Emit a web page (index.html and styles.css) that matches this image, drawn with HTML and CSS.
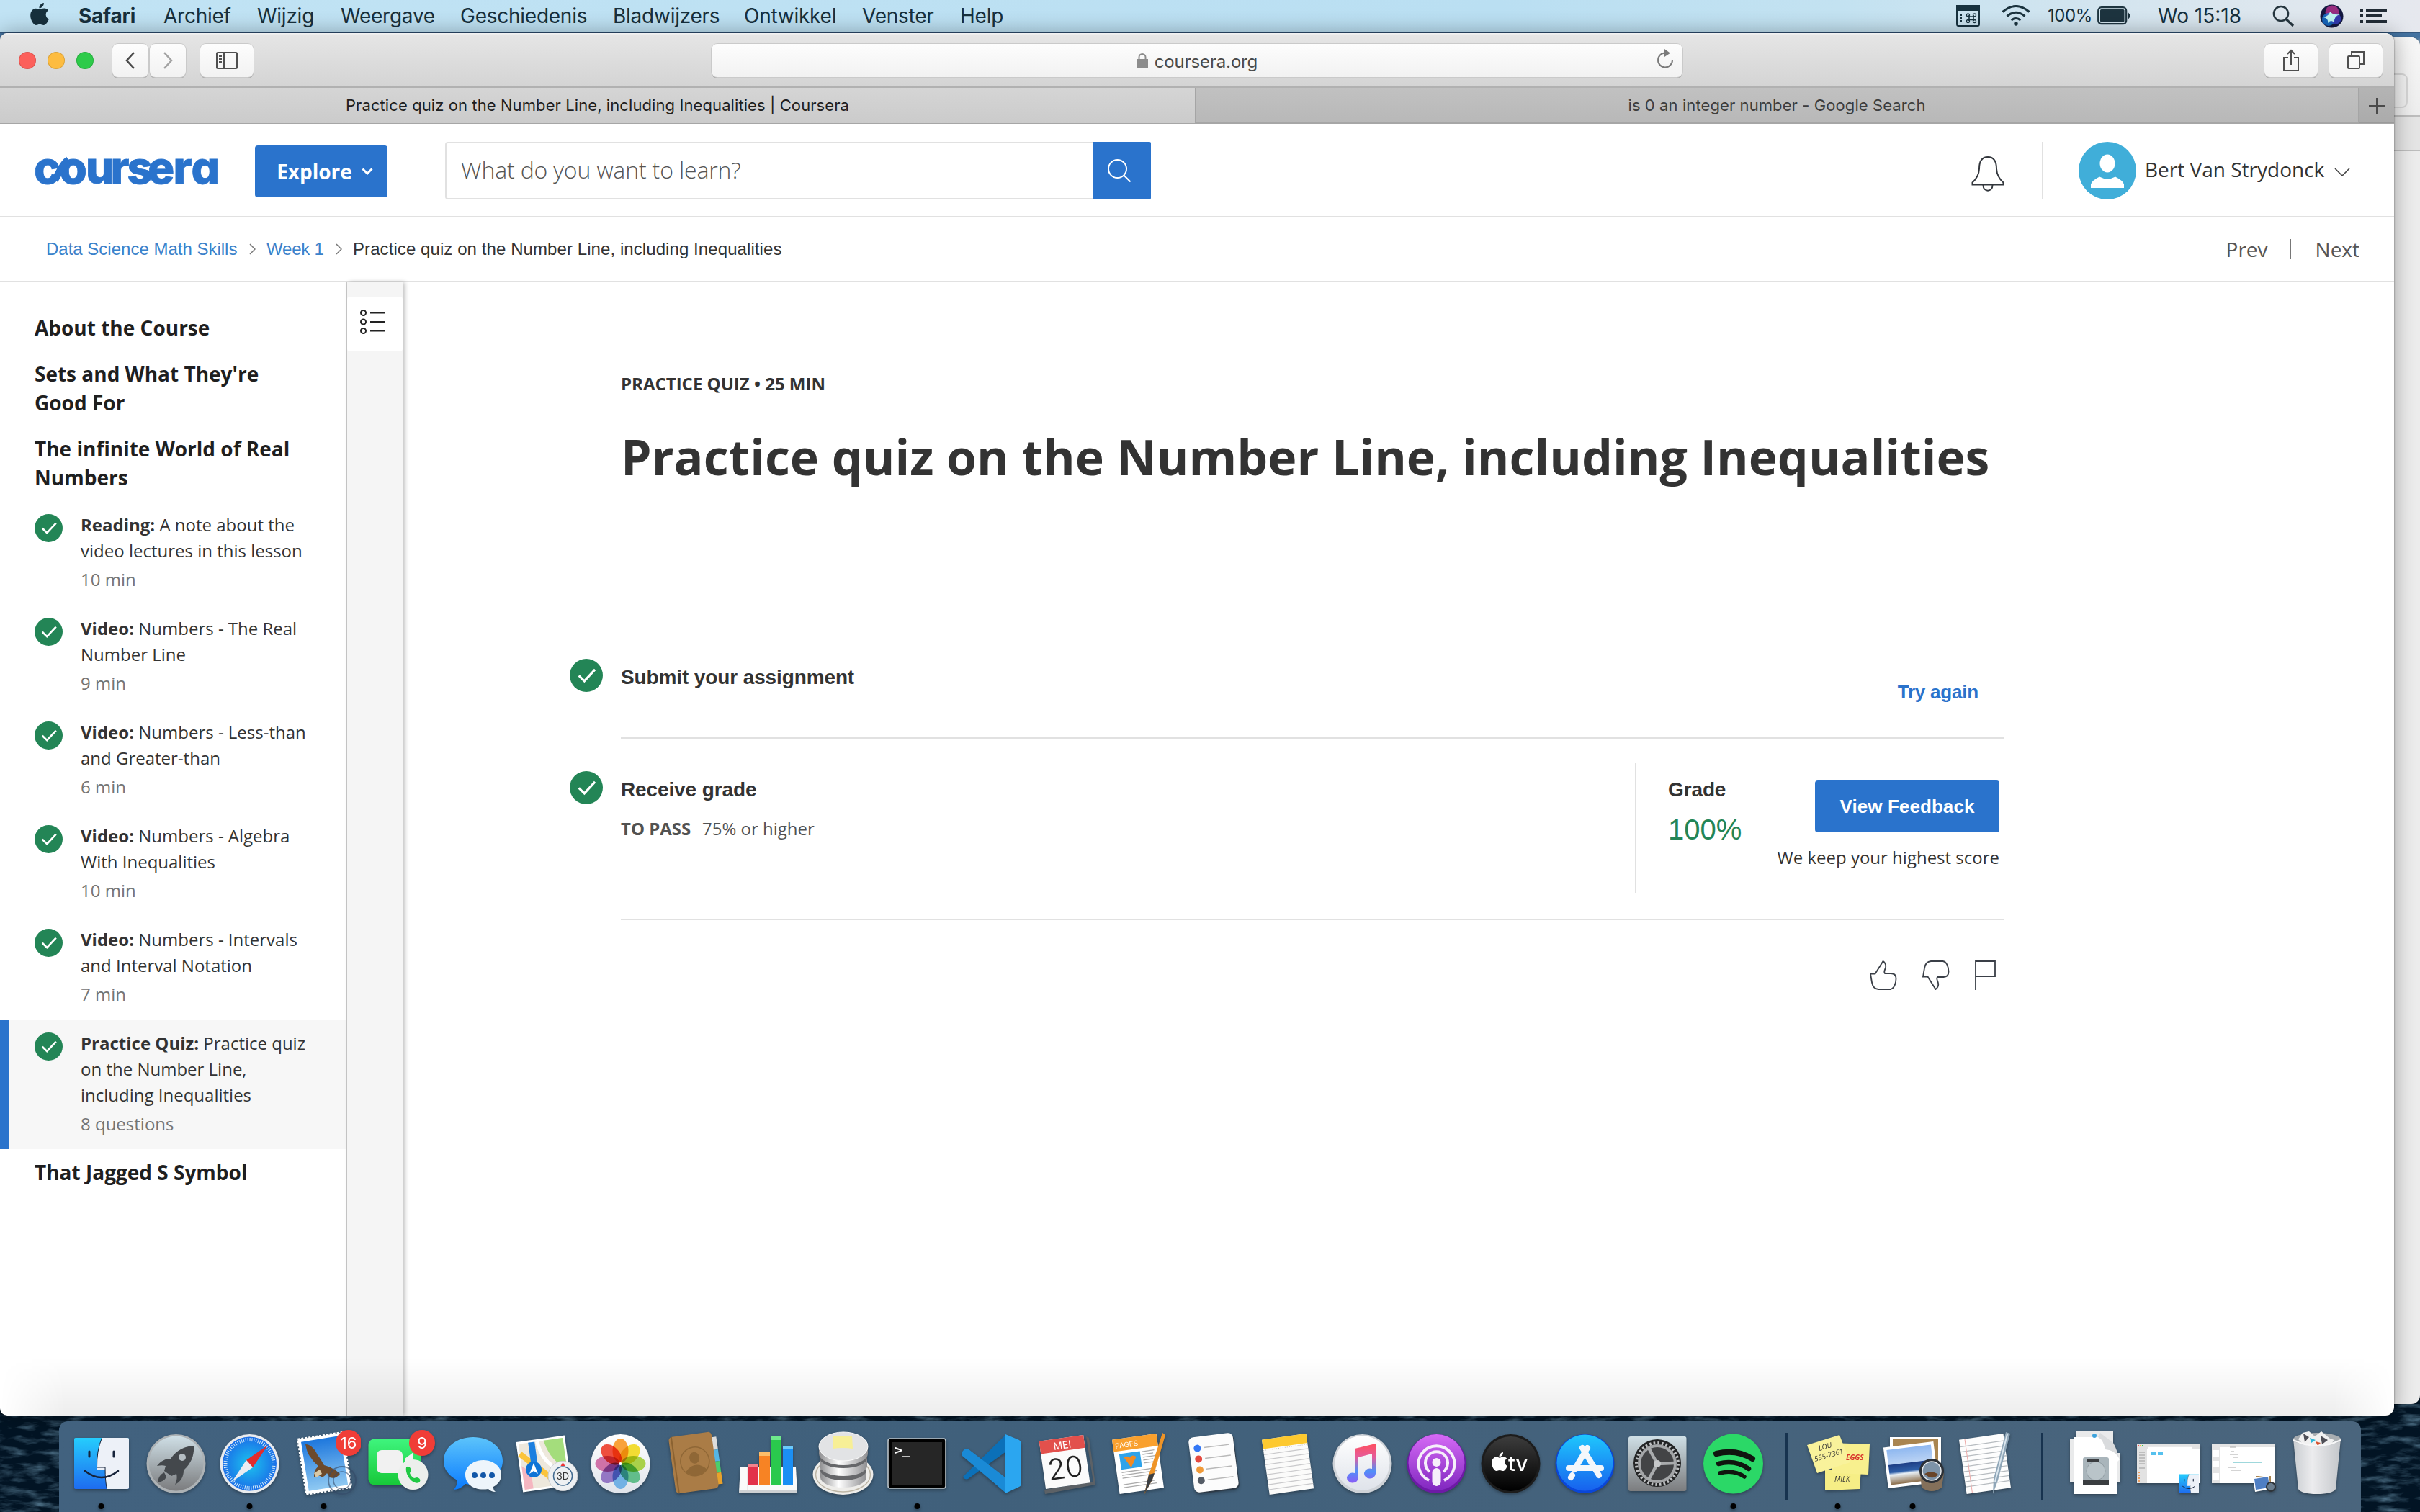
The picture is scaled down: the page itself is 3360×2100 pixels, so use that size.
FILE: index.html
```html
<!DOCTYPE html>
<html lang="nl">
<head>
<meta charset="utf-8">
<title>Practice quiz on the Number Line, including Inequalities | Coursera</title>
<link rel="stylesheet" href="styles.css">
</head>
<body>
<svg class="defs" width="0" height="0" aria-hidden="true">
  <defs>
    <linearGradient id="gFinder" x2="0" y2="1"><stop offset="0" stop-color="#25cdfd"/><stop offset="1" stop-color="#1e6cf0"/></linearGradient>
    <linearGradient id="gWhite" x2="0" y2="1"><stop offset="0" stop-color="#fff"/><stop offset="1" stop-color="#dfe3ea"/></linearGradient>
    <linearGradient id="gGrey" x2="0" y2="1"><stop offset="0" stop-color="#cfdfe6"/><stop offset="1" stop-color="#7b7c7e"/></linearGradient>
    <linearGradient id="gGreen" x2="0" y2="1"><stop offset="0" stop-color="#3ff57e"/><stop offset="1" stop-color="#17c838"/></linearGradient>
    <linearGradient id="gMsg" x2="0" y2="1"><stop offset="0" stop-color="#5cc4fb"/><stop offset="1" stop-color="#0a7bff"/></linearGradient>
    <radialGradient id="gCompass"><stop offset="0" stop-color="#1cc4ee"/><stop offset="1" stop-color="#1a6fe8"/></radialGradient>
    <linearGradient id="gSky" x2="0" y2="1"><stop offset="0" stop-color="#1d77dd"/><stop offset="1" stop-color="#8fc9f2"/></linearGradient>
    <linearGradient id="gPod" x2="0" y2="1"><stop offset="0" stop-color="#d56af5"/><stop offset="1" stop-color="#8128c0"/></linearGradient>
    <linearGradient id="gStore" x2="0" y2="1"><stop offset="0" stop-color="#1fc8fd"/><stop offset="1" stop-color="#1761ee"/></linearGradient>
    <linearGradient id="gTv" x2="0" y2="1"><stop offset="0" stop-color="#3c3c3c"/><stop offset="1" stop-color="#000"/></linearGradient>
    <linearGradient id="gNote" x2="0" y2="1"><stop offset="0" stop-color="#ff4f5e"/><stop offset=".35" stop-color="#e45c9c"/><stop offset=".7" stop-color="#4f8ff8"/><stop offset="1" stop-color="#8a5cf6"/></linearGradient>
    <linearGradient id="gMetal" x2="1" y2="0"><stop offset="0" stop-color="#8d8d8f"/><stop offset=".4" stop-color="#fff"/><stop offset="1" stop-color="#8f8f92"/></linearGradient>
    <linearGradient id="gBin" x2="1" y2="0"><stop offset="0" stop-color="#c9cdd1"/><stop offset=".4" stop-color="#ececee"/><stop offset="1" stop-color="#c3c6ca"/></linearGradient>
    <linearGradient id="gSea" x2="0" y2="1"><stop offset="0" stop-color="#8fb8f0"/><stop offset=".42" stop-color="#b9d2f4"/><stop offset=".44" stop-color="#1f3f86"/><stop offset=".65" stop-color="#2e5fa8"/><stop offset=".72" stop-color="#e8f0f6"/><stop offset="1" stop-color="#8a6c48"/></linearGradient>
    <filter id="waves" x="0" y="0" width="100%" height="100%">
      <feTurbulence type="fractalNoise" baseFrequency=".03 .11" numOctaves="4" seed="4"/>
      <feColorMatrix values="0 0 0 0 .15  0 0 0 0 .3  0 0 0 0 .42  1.500 0 0 0 -.68"/>
    </filter>
    <symbol id="check" viewBox="0 0 38 38"><circle cx="19" cy="19" r="19" fill="#238556"/><path d="M10.5 19.3l6.3 6.2L29 12.3" fill="none" stroke="#fff" stroke-width="2.6"/></symbol>
    <symbol id="apple" viewBox="0 0 24 30"><path d="M17.5 0c.3 3.600-2.700 7-6 6.900C11.200 3.600 14.200.300 17.500 0zM12 8.500c1.500 0 3-1.500 6-1.500 2.200 0 4.300 1.200 5.300 2.800-4.700 2.700-3.900 9.300.700 11.200-1.200 3.600-4.200 8-6.700 8-2 0-2.800-1.200-5.100-1.200-2.400 0-3.300 1.200-5.100 1.200C4.200 29 0 22.500 0 16.500 0 10.400 3.700 7.200 7 7.200c2.200 0 3.700 1.300 5 1.300z"/></symbol>
    <symbol id="finder" viewBox="0 0 76 71"><rect width="76" height="71" rx="2" fill="url(#gFinder)"/><path d="M38.500 0H74a2 2 0 0 1 2 2v67a2 2 0 0 1-2 2H45.500Q43 61 43 44H31.500Q31 18 38.500 0z" fill="#edf1f8"/><path d="M21 19v7M55 19v7" stroke="#16233a" stroke-width="3" stroke-linecap="round"/><path d="M15 46q23 18 46 0" fill="none" stroke="#16233a" stroke-width="2.600" stroke-linecap="round"/><path d="M38.500 0Q31 18 31.500 41H43Q43 61 45.500 71" fill="none" stroke="#16233a" stroke-width="1"/></symbol>
  </defs>
</svg>

<div class="desktop">
  <svg class="wallpaper" width="3360" height="150" aria-hidden="true"><rect width="3360" height="150" filter="url(#waves)"/></svg>

  <header class="menubar">
    <svg class="apple" width="26" height="32"><use href="#apple"/></svg>
    <nav class="menus"><b>Safari</b><span>Archief</span><span>Wijzig</span><span>Weergave</span><span>Geschiedenis</span><span>Bladwijzers</span><span>Ontwikkel</span><span>Venster</span><span>Help</span></nav>
    <div class="status">
      <svg width="33" height="30" viewBox="0 0 33 30" fill="none" stroke="#17323f" stroke-width="2"><rect x="1" y="1" width="31" height="28" rx="2.500"/><path fill="#17323f" d="M1 1h31v6H1z"/><path d="M5 14h3M5 18h3M5 22h3" /><path stroke-width="1.600" d="M18 14v8M24 14v8M16 16h10M16 20.500h10"/><circle cx="16.500" cy="14" r="2" stroke-width="1.300"/><circle cx="25.500" cy="14" r="2" stroke-width="1.300"/><circle cx="16.500" cy="22.500" r="2" stroke-width="1.300"/><circle cx="25.500" cy="22.500" r="2" stroke-width="1.300"/></svg>
      <svg width="40" height="30" viewBox="0 0 40 30" fill="none" stroke="#1b333e" stroke-width="3"><path d="M1.500 9.500q18.500-16 37 0M7.500 15.500q12.500-10.500 25 0M13.500 21q6.500-5 13 0"/><circle cx="20" cy="26" r="2" fill="#1b333e" stroke-width="1.500"/></svg>
      <span class="percent">100%</span>
      <svg class="battery" width="48" height="26" viewBox="0 0 48 26"><rect x="1.200" y="1.200" width="39" height="23" rx="4.500" fill="none" stroke="#1d343f" stroke-width="2.200"/><rect x="4" y="4" width="33.500" height="17.500" rx="1.500" fill="#1d343f"/><path d="M43 8.500q5 4.500 0 9z" fill="#1d343f"/></svg>
      <span class="clock">Wo 15:18</span>
      <svg width="31" height="30" viewBox="0 0 31 30" fill="none" stroke="#26363f" stroke-width="2.600"><circle cx="12" cy="12" r="10"/><path d="M19 19.500l10 9.500" stroke-width="3.200"/></svg>
      <svg class="siri" width="33" height="33" viewBox="0 0 33 33"><circle cx="16.500" cy="16.500" r="16" fill="#141840"/><circle cx="17" cy="11" r="9.500" fill="#b8338f" opacity=".8"/><circle cx="12" cy="21" r="9" fill="#1779d8" opacity=".8"/><circle cx="22" cy="20" r="7.500" fill="#3a44c8" opacity=".8"/><path d="M5 18q8-2 9-8 3 5 14 4-9 2-8 12-4-6-9 0 1-7-6-8z" fill="#bff4f2"/></svg>
      <svg width="37" height="21" viewBox="0 0 37 21" fill="#222c36"><path d="M0 0h4v4H0zM8 0h29v4H8zM0 8h4v4H0zM8 8h22v4H8zM0 16h4v4H0zM8 16h29v4H8z"/></svg>
    </div>
  </header>

  <div class="back-window"><div class="back-tools"></div><div class="back-tabs"></div></div>

  <main class="window">
    <div class="toolbar">
      <div class="lights"><i class="red"></i><i class="amber"></i><i class="green"></i></div>
      <div class="nav-buttons">
        <span class="tool"><svg width="14" height="24" fill="none" stroke="#4a4a4a" stroke-width="2.600"><path d="M12 1L2 12l10 11"/></svg></span>
        <span class="tool"><svg width="14" height="24" fill="none" stroke="#a3a3a3" stroke-width="2.600"><path d="M2 1l10 11L2 23"/></svg></span>
      </div>
      <span class="tool wide"><svg width="30" height="24" fill="none" stroke="#4f4f4f" stroke-width="2"><rect x="1" y="1" width="28" height="22" rx="1.500"/><path d="M11 1v22M4 6h4M4 10h4M4 14h4"/></svg></span>
      <div class="address"><span class="site"><svg width="16" height="20" viewBox="0 0 16 20"><path d="M0 8h16v12H0z" fill="#8c8c8c"/><path d="M3.500 9V5.500a4.500 4.500 0 0 1 9 0V9" fill="none" stroke="#8c8c8c" stroke-width="2"/></svg>coursera.org</span><svg class="reload" width="24" height="28" viewBox="0 0 24 28" fill="none" stroke="#7a7a7a" stroke-width="2"><path d="M12 5.500a10 10 0 1 0 10 10"/><path d="M11 0l8 5.800-8 5.200z" fill="#7a7a7a" stroke="none"/></svg></div>
      <span class="tool wide share"><svg width="22" height="32" fill="none" stroke="#4f4f4f" stroke-width="2"><path d="M7 12H1v18h20V12h-6M11 22V2M6 7l5-5 5 5"/></svg></span>
      <span class="tool wide"><svg width="24" height="26" fill="none" stroke="#4f4f4f" stroke-width="2"><rect x="1" y="7" width="16" height="17" rx="1"/><path d="M6 7V1h17v17h-6"/></svg></span>
    </div>
    <div class="tabs">
      <div class="tab active">Practice quiz on the Number Line, including Inequalities | Coursera</div>
      <div class="tab">is 0 an integer number - Google Search</div>
      <div class="new-tab"><svg width="22" height="22" stroke="#4a4a4a" stroke-width="2"><path d="M11 0v22M0 11h22"/></svg></div>
    </div>

    <div class="page">
      <header class="site-header">
        <svg class="logo" width="256" height="44" viewBox="0 0 256 44" role="img" aria-label="coursera"><text y="39" x="-2 33.500 70 104.500 127.500 156 191.500 216.500">coursera</text><path d="M27 34C33 25 37 12 46 6" fill="none" stroke="#2a73cc" stroke-width="10"/></svg>
        <button class="explore">Explore<svg width="16" height="10" fill="none" stroke="#fff" stroke-width="3"><path d="M1.500 1.500L8 8l6.500-6.500"/></svg></button>
        <div class="search"><span>What do you want to learn?</span><button><svg width="32" height="32" fill="none" stroke="#fff" stroke-width="2"><circle cx="13.500" cy="13.500" r="12.500"/><path d="M22 22l9.500 9.500"/></svg></button></div>
        <div class="account">
          <svg class="bell" width="46" height="49" viewBox="0 0 46 49" fill="none" stroke="#33373d" stroke-width="2"><path d="M1.500 39.500v-3q9-8 9.500-19Q11 1 23 1t12 16.500q.5 11 9.500 19v3zM16.500 40.500c0 9.500 13 9.500 13 0"/></svg>
          <span class="rule"></span>
          <svg class="avatar" width="80" height="80" viewBox="0 0 80 80"><circle cx="40" cy="40" r="40" fill="#40aed9"/><ellipse cx="40" cy="30" rx="10.500" ry="12.500" fill="#fff"/><path d="M17 64v-5q1-5 12-10.500 11 6 22 0Q62 54 63 59v5z" fill="#fff"/></svg>
          <span class="user">Bert Van Strydonck</span>
          <svg class="caret" width="22" height="12" fill="none" stroke="#444" stroke-width="1.600"><path d="M1 1l10 10L21 1"/></svg>
        </div>
      </header>

      <nav class="crumbs">
        <a class="c1">Data Science Math Skills</a><svg width="9" height="16" fill="none" stroke="#777" stroke-width="1.500"><path d="M1 1l7 7-7 7"/></svg>
        <a class="c2">Week 1</a><svg width="9" height="16" fill="none" stroke="#777" stroke-width="1.500"><path d="M1 1l7 7-7 7"/></svg>
        <span class="here">Practice quiz on the Number Line, including Inequalities</span>
        <span class="prev">Prev</span><i></i><span class="next">Next</span>
      </nav>

      <div class="body">
        <aside class="sidebar">
          <h3>About the Course</h3>
          <h3>Sets and What They're<br>Good For</h3>
          <h3>The infinite World of Real<br>Numbers</h3>
          <div class="item"><svg width="39" height="39"><use href="#check"/></svg><p><b>Reading:</b> A note about the<br>video lectures in this lesson<small>10 min</small></p></div>
          <div class="item"><svg width="39" height="39"><use href="#check"/></svg><p><b>Video:</b> Numbers - The Real<br>Number Line<small>9 min</small></p></div>
          <div class="item"><svg width="39" height="39"><use href="#check"/></svg><p><b>Video:</b> Numbers - Less-than<br>and Greater-than<small>6 min</small></p></div>
          <div class="item"><svg width="39" height="39"><use href="#check"/></svg><p><b>Video:</b> Numbers - Algebra<br>With Inequalities<small>10 min</small></p></div>
          <div class="item"><svg width="39" height="39"><use href="#check"/></svg><p><b>Video:</b> Numbers - Intervals<br>and Interval Notation<small>7 min</small></p></div>
          <div class="item current"><svg width="39" height="39"><use href="#check"/></svg><p><b>Practice Quiz:</b> Practice quiz<br>on the Number Line,<br>including Inequalities<small>8 questions</small></p></div>
          <h3>That Jagged S Symbol</h3>
        </aside>
        <div class="rail"><span><svg width="35" height="34" fill="none" stroke="#222" stroke-width="2"><circle cx="4.500" cy="4.500" r="3.500"/><circle cx="4.500" cy="17" r="3.500"/><circle cx="4.500" cy="29.500" r="3.500"/><path d="M14 4.500h21M14 17h21M14 29.500h21"/></svg></span></div>
        <section class="quiz">
          <p class="kind">PRACTICE QUIZ • 25 MIN</p>
          <h1>Practice quiz on the Number Line, including Inequalities</h1>
          <div class="step submit">
            <svg class="done" width="46" height="46"><use href="#check"/></svg>
            <div class="what"><h2>Submit your assignment</h2></div>
            <a class="again">Try again</a>
          </div>
          <div class="step receive">
            <svg class="done" width="46" height="46"><use href="#check"/></svg>
            <div class="what"><h2>Receive grade</h2><p><b>TO PASS</b>75% or higher</p></div>
            <div class="grade"><div><h2>Grade</h2><strong>100%</strong></div><div class="feedback"><button>View Feedback</button><p>We keep your highest score</p></div></div>
          </div>
          <div class="votes">
            <svg width="38" height="41" viewBox="0 0 38 41" fill="none" stroke="#3a3f47" stroke-width="1.800"><path d="M1 18.500h6.500L18.500 1c4 3 4.500 6.500 3 10.500-1.500 3-2 4.500-.5 6.500h8.500c5 0 7 2.500 7 7.500 0 7-3 14-8 14.500H12c-5.500-.5-8-3.500-9-9.500z"/></svg>
            <svg width="38" height="41" viewBox="0 0 38 41" fill="none" stroke="#3a3f47" stroke-width="1.800"><path d="M1 22.500h6.500L18.500 40c4-3 4.500-6.500 3-10.500-1.500-3-2-4.500-.5-6.500h8.500c5 0 7-2.500 7-7.500 0-7-3-14-8-14.500H12C6.500 1.500 4 4.500 3 10.500z"/></svg>
            <svg width="30" height="41" fill="none" stroke="#3a3f47" stroke-width="1.800"><path d="M1 41V1h27v21H1"/></svg>
          </div>
        </section>
      </div>
    </div>
  </main>

  <footer class="dock">
    <svg class="on" viewBox="0 0 103 126"><use href="#finder" x="14" y="23" width="76" height="71"/><circle class="dot" cx="51.500" cy="118" r="4"/></svg>
    <svg viewBox="0 0 103 126"><circle cx="52.500" cy="59" r="41" fill="#adb2b5"/><circle cx="52.500" cy="58.500" r="38" fill="url(#gGrey)"/><path d="M77 34c-14 1-25 7-32 18-7 0-14 3-19 10 5-1 9-1 12 0l-2 7 10 7 7-3c1 4 1 9-2 15 8-4 12-11 12-20 10-9 15-20 14-34zM36 71c-6 3-8 7-9 14 6-1 10-3 12-8z" fill="#44484c"/><circle cx="61" cy="50" r="5" fill="#b5bec3"/></svg>
    <svg viewBox="0 0 103 126"><circle cx="51.500" cy="59" r="41" fill="#e9ebee"/><circle cx="51.500" cy="59" r="37.500" fill="url(#gCompass)"/><circle cx="51.500" cy="59" r="33.500" fill="none" stroke="#d7ecfa" stroke-width="5" stroke-dasharray="1 1.920"/><path d="M77 33L56 64l-9-10z" fill="#e22c2c"/><path d="M27 84l20-30 9 10z" fill="#e9ecf1"/><circle class="dot" cx="51.500" cy="118" r="4"/></svg>
    <svg viewBox="0 0 103 126"><g transform="rotate(-9 52 58)"><rect x="21" y="20" width="63" height="77" fill="#fff" stroke="#fff" stroke-width="3" stroke-dasharray="3 2"/><rect x="25" y="24" width="55" height="69" fill="url(#gSky)"/></g><path d="M26 32c7 0 13 6 17 15 4 5 6 9 9 14 7 2 15 5 22 12-4 5-8 7-14 5l-4-6c-2 3-5 6-8 5-3-2-6-2-10 1 0-7 1-12 6-15-2-4-6-5-10-12-6-7-6-12-8-19z" fill="#6d4a2b"/><path d="M38 72l8-5 3 6-8 5z" fill="#d9c8a6"/><g fill="none" stroke="#354a68" opacity=".6"><circle cx="77" cy="82" r="19" stroke-width="2"/><circle cx="77" cy="82" r="12" stroke-width="1.500"/></g><circle cx="86" cy="30" r="18" fill="#f03d37"/><text class="badge" x="86" y="38">16</text><circle class="dot" cx="51.500" cy="118" r="4"/></svg>
    <svg viewBox="0 0 103 126"><rect x="10.500" y="24" width="73" height="65" rx="9" fill="url(#gGreen)"/><rect x="22" y="40" width="36" height="32" rx="7" fill="#f1f1f1"/><path d="M61 52l12-9v26l-12-7z" fill="#f1f1f1"/><circle cx="72.500" cy="74" r="21" fill="#ecefec"/><path d="M63 64c3-3 6 0 7 4l-2 4q2 5 6 7l4-1c4 1 6 4 3 7-9 4-20-11-18-21z" fill="#1fc943"/><circle cx="85" cy="30" r="18" fill="#f03d37"/><text class="badge" x="85" y="38">9</text></svg>
    <svg viewBox="0 0 103 126"><path d="M53 22c23 0 41 14 41 33S76 88 53 88q-6 0-11-1-6 7-16 8 5-6 5-13Q12 72 12 55c0-19 18-33 41-33z" fill="url(#gMsg)"/><path d="M67 54c14 0 25 9 25 20 0 8-4 13-11 17 0 4 1 5 3 7-5 0-8-2-10-4-19 3-32-6-32-20 0-11 11-20 25-20z" fill="#edf5fb"/><g fill="#1157a8"><circle cx="55" cy="75" r="4"/><circle cx="67" cy="75" r="4"/><circle cx="79" cy="75" r="4"/></g></svg>
    <svg viewBox="0 0 103 126"><g transform="rotate(-8 48 59)"><path fill="#fff" d="M14 24h68v70H14z"/><path fill="#eee8dc" d="M17 27h62v64H17z"/><path fill="#f5b6c0" d="M17 58l12 10v23H17z"/><path fill="#a4dd7c" d="M52 27h27v42Q58 58 52 27z"/><path fill="none" stroke="#fff" stroke-width="5" d="M43 27q4 36 36 50"/><path fill="none" stroke="#fbc43b" stroke-width="8" d="M17 41l36 36 8 14"/><path fill="none" stroke="#1c7fe0" stroke-width="9" d="M35 27v30"/></g><circle cx="34" cy="67" r="11" fill="#0f74d6"/><path d="M34 58l6 15-6-4-6 4z" fill="#fff"/><circle cx="74.500" cy="76" r="20.500" fill="#eef0f2" stroke="#c9ccd0"/><circle cx="74.500" cy="76" r="13" fill="none" stroke="#416a90" stroke-width="1.500"/><path d="M71.500 62l3-5 3 5z" fill="#e33"/><text class="tiny3d" x="74.500" y="81">3D</text></svg>
    <svg viewBox="0 0 103 126"><circle cx="51.500" cy="59" r="41" fill="url(#gWhite)"/><g class="petals"><ellipse cx="51.500" cy="41" rx="11" ry="17" fill="#f9a23a"/><ellipse transform="rotate(45 51.500 59)" cx="51.500" cy="41" rx="11" ry="17" fill="#f2dc33"/><ellipse transform="rotate(90 51.500 59)" cx="51.500" cy="41" rx="11" ry="17" fill="#a9d14a"/><ellipse transform="rotate(135 51.500 59)" cx="51.500" cy="41" rx="11" ry="17" fill="#62bd8b"/><ellipse transform="rotate(180 51.500 59)" cx="51.500" cy="41" rx="11" ry="17" fill="#72b1e4"/><ellipse transform="rotate(225 51.500 59)" cx="51.500" cy="41" rx="11" ry="17" fill="#9477c4"/><ellipse transform="rotate(270 51.500 59)" cx="51.500" cy="41" rx="11" ry="17" fill="#cf72a8"/><ellipse transform="rotate(315 51.500 59)" cx="51.500" cy="41" rx="11" ry="17" fill="#ee4f3e"/></g><circle cx="51.500" cy="59" r="2" fill="#fff"/></svg>
    <svg viewBox="0 0 103 126"><g transform="rotate(-8 50 57)"><path fill="#dcdcdc" d="M79 26h7v18h-7z"/><path fill="#56b5e3" d="M79 44h7v16h-7z"/><path fill="#4bcf6c" d="M79 60h7v16h-7z"/><path fill="#e8a22c" d="M79 76h7v16h-7z"/><rect x="20" y="18" width="60" height="79" rx="5" fill="#aa7c46"/><path d="M24 18v79" stroke="#8b6231" stroke-width="2"/><g fill="none" stroke="#8f6736" stroke-width="1.500"><circle cx="52" cy="56" r="20"/></g><ellipse cx="52" cy="51" rx="7" ry="8" fill="#8f6736"/><path d="M37 69q15-16 30 0-14 13-30 0z" fill="#8f6736"/></g></svg>
    <svg viewBox="0 0 103 126"><path d="M12 64h77l2 34H10z" fill="#fafafa"/><path d="M10 96h81v3H10z" fill="#cdd0d3"/><path d="M22 64v32" stroke="#ddd"/><rect x="22" y="59" width="15" height="30" fill="#e2324a"/><rect x="38" y="43" width="15" height="46" fill="#f78324"/><rect x="55" y="21" width="14" height="68" fill="#2ac94d"/><rect x="71" y="34" width="14" height="55" fill="#1b8ff4"/><path d="M22 59h15v5H22z" fill="#f3828c"/><path d="M38 43h15v5H38z" fill="#fbbd6a"/><path d="M55 21h14v5H55z" fill="#6eea8c"/><path d="M71 34h14v5H71z" fill="#6cc9fa"/></svg>
    <svg viewBox="0 0 103 126"><ellipse cx="51.500" cy="74" rx="42" ry="28" fill="#eeedea"/><ellipse cx="51.500" cy="74" rx="38" ry="24" fill="none" stroke="#bdb6a6" stroke-width="1.500"/><path d="M20 68v10a32 14 0 0 0 64 0V68z" fill="url(#gMetal)"/><ellipse cx="52" cy="68" rx="32" ry="14" fill="#66676a"/><path d="M19 50v12a33 14 0 0 0 66 0V50z" fill="url(#gMetal)"/><ellipse cx="52" cy="51" rx="33" ry="14" fill="#66676a"/><path d="M18 36v9a34 16 0 0 0 68 0V36z" fill="url(#gMetal)"/><ellipse cx="52" cy="35" rx="34" ry="20" fill="#e2e3e5" stroke="#fafafa"/><path d="M38 21h26l1 17q-14-2-28 0z" fill="#f7ef96"/></svg>
    <svg viewBox="0 0 103 126"><rect x="11" y="24" width="80" height="69" rx="3" fill="#000" stroke="#b9c2c8" stroke-width="1.600"/><path fill="#262626" d="M16 29h70v59H16z"/><text class="prompt" x="20" y="46">&gt;_</text><circle class="dot" cx="51.500" cy="118" r="4"/></svg>
    <svg viewBox="0 0 103 126"><path d="M12 77l60-59v24L19 80q-4 2-7-3z" fill="#0b70b8"/><path d="M12 41q4-5 8-2l52 40v21L11 48q-2-4 1-7z" fill="#1a8ad6"/><path d="M71 18l19 8q3 2 3 5v55q0 4-3 5l-19 9q-1-3 0-5V22z" fill="#2ba6f0"/></svg>
    <svg viewBox="0 0 103 126"><path d="M22 95l68-11-10-63 4 2 9 65-70 13z" fill="#5c6166"/><g transform="rotate(-8 50 56)"><path fill="#fbfbfb" d="M19 23h62v67H19z"/><path fill="#e2504c" d="M19 23h62v18H19z"/><text class="month" x="50" y="38">MEI</text><text class="day" x="50" y="79">20</text></g></svg>
    <svg viewBox="0 0 103 126"><g transform="rotate(-8 49 59)"><path fill="#fff" d="M18 21h62v76H18z"/><path fill="#f9a02e" d="M18 21h62v17H18z"/><text class="pages" x="21" y="34">PAGES</text><path fill="#2fa3ea" d="M25 42h29v22H25z"/><path d="M39 63l-8-15q4-3 8 1 4-5 9 0z" fill="#f28a22"/><path stroke="#aaa" stroke-width="1.300" d="M57 43h17M57 47h15M57 51h17M57 55h14M57 59h17M25 68h46M25 72h49M25 76h44M25 85h44M25 89h46"/></g><path d="M83 16l-20 62-5 23 11-20 18-62z" fill="#ef9427"/><path d="M64 74l-6 27 11-20 3-9z" fill="#3b3f44"/></svg>
    <svg viewBox="0 0 103 126"><g transform="rotate(-7 51 58)"><rect x="21" y="21" width="62" height="77" rx="7" fill="#2c3138" opacity=".6"/><rect x="20" y="19" width="62" height="77" rx="7" fill="#fcfcfc"/><path d="M40 35h36M40 50h36M40 65h36M40 80h36" stroke="#b9b9b9" stroke-width="1.500"/><circle cx="31" cy="35" r="5" fill="#3478f6"/><circle cx="31" cy="50" r="5" fill="#e5493f"/><circle cx="31" cy="65" r="5" fill="#f09a38"/><circle cx="31" cy="80" r="5" fill="#555c66"/></g></svg>
    <svg viewBox="0 0 103 126"><g transform="rotate(-8 51 59)"><path fill="#fbfbfa" d="M20 21h62v77H20z"/><path fill="#fdc92f" d="M20 21h62v13H20z"/><path d="M20 36h62" stroke="#b9b9b9" stroke-dasharray="1 2"/><path stroke="#c9c9cb" stroke-width="1.200" d="M20 42h62M20 49h62M20 56h62M20 63h62M20 70h62M20 77h62M20 84h62M20 91h62"/></g></svg>
    <svg viewBox="0 0 103 126"><circle cx="51.500" cy="59" r="41" fill="#cfd3d8"/><circle cx="51.500" cy="58" r="38" fill="url(#gWhite)"/><path d="M41 38l29-7v41a8 7 0 1 1-5-6V45l-19 5v28a8 7 0 1 1-5-6z" fill="url(#gNote)"/></svg>
    <svg viewBox="0 0 103 126"><circle cx="51.500" cy="59" r="41" fill="#6d1aa6"/><circle cx="51.500" cy="57" r="39" fill="url(#gPod)"/><g fill="none" stroke="#f6effa" stroke-width="4"><path d="M41 82a25 25 0 1 1 21 0"/><path d="M42 70a15.500 15.500 0 1 1 19 0"/></g><circle cx="51.500" cy="57" r="6" fill="#f6effa"/><rect x="45.500" y="65" width="12" height="25" rx="6" fill="#f6effa"/></svg>
    <svg viewBox="0 0 103 126"><circle cx="51.500" cy="59" r="41" fill="#1c1c1c"/><circle cx="51.500" cy="59" r="38" fill="url(#gTv)"/><use href="#apple" x="25" y="43" width="22" height="27" fill="#fff"/><text class="tv" x="48" y="69">tv</text></svg>
    <svg viewBox="0 0 103 126"><circle cx="51.500" cy="59" r="41" fill="#0a46d8"/><circle cx="51.500" cy="57.500" r="39" fill="url(#gStore)"/><g stroke="#f4f7fb" stroke-width="8" stroke-linecap="round"><path d="M55 37L37 67M48 37l23 38M29 65h45M34 75l-2 3" /></g></svg>
    <svg viewBox="0 0 103 126"><rect x="9" y="21" width="80.500" height="76" rx="3" fill="url(#gGrey)"/><ellipse cx="49" cy="58" rx="33" ry="33" fill="#232425"/><circle cx="49" cy="59" r="25" fill="#434446" stroke="#a4a6a8" stroke-width="4"/><circle cx="49" cy="59" r="29" fill="none" stroke="#bfc1c3" stroke-width="4" stroke-dasharray="2.600 3.100"/><path d="M49 59l24-1M49 59L37 37M49 59L37 81" stroke="#a9abad" stroke-width="4.500"/><circle cx="49" cy="59" r="5" fill="#c6c8ca"/></svg>
    <svg viewBox="0 0 103 126"><circle cx="51.500" cy="59" r="41.500" fill="#2bd867"/><g fill="none" stroke="#10150f" stroke-linecap="round"><path d="M28 45q28-7 50 7" stroke-width="8"/><path d="M31 59q23-6 42 7" stroke-width="6.500"/><path d="M33 72q19-5 34 5" stroke-width="5.500"/></g><circle class="dot" cx="51.500" cy="118" r="4"/></svg>
    <span class="split"></span>
    <svg viewBox="0 0 103 126"><path d="M34 68l50-2-2 28-48 2z" fill="#f6ee86"/><path d="M42 30l54 2-2 42-50-2z" fill="#f8f08e"/><path d="M9 33l45-14 15 38-46 15z" fill="#f9f29b"/><text class="sticky ink" x="26" y="41" transform="rotate(-16 26 41)">LOU</text><text class="sticky ink" x="20" y="56" transform="rotate(-16 20 56)">555-7361</text><text class="sticky red-ink" x="63" y="54">EGGS</text><text class="sticky" x="47" y="84">MILK</text><circle class="dot" cx="51.500" cy="118" r="4"/></svg>
    <svg viewBox="0 0 103 126"><path fill="#fff" d="M21 22h71v56H21z"/><path fill="#a98550" d="M25 25h63v50H25z"/><g transform="rotate(-7 50 60)"><path fill="#fff" d="M15 32h70v57H15z"/><path fill="url(#gSea)" d="M19 36h62v49H19z"/></g><path d="M63 72l2 20q14 10 28 0l3-20z" fill="#84705a"/><circle cx="79" cy="69" r="17" fill="#2b3036"/><circle cx="79" cy="69" r="13" fill="#7d93a8" stroke="#e5e9ec" stroke-width="1.500"/><path d="M69 73q10-6 19 1-8 9-19-1z" fill="#69452a"/><circle class="dot" cx="52.500" cy="118" r="4"/></svg>
    <svg viewBox="0 0 103 126"><g transform="rotate(-8 50 59)"><path fill="#fdfdfd" d="M19 21h62v76H19z"/><path stroke="#b7bcc0" stroke-width="1.300" d="M19 31h62M19 38h62M19 45h62M19 52h62M19 59h62M19 66h62M19 73h62M19 80h62M19 87h62"/><path d="M27 21v76" stroke="#eeaaa8"/></g><path d="M79 15l6 2-17 65-7 19 1-21z" fill="#8fa6b8"/><path d="M81 18L64 84" stroke="#dbe6ee" stroke-width="2"/></svg>
    <span class="split late"></span>
    <svg viewBox="0 0 103 126"><path d="M16 24h8V14h52v30h10v40H16z" fill="#e9eaeb"/><path d="M21 22h34q6 0 10 17 16 1 20 14l-4 4v44H21z" fill="#fff"/><path d="M55 22q8 4 10 17 14 1 20 14Q80 36 76 30L58 16z" fill="#d9dbdd"/><rect x="34" y="50" width="36" height="38" rx="3" fill="#a9b5bb"/><circle cx="52" cy="69" r="13" fill="#b9c4c9" stroke="#8f9ba1"/><path d="M39 52h17v5H39zM34 82h36v6H34z" fill="#3a3d40"/><circle cx="50" cy="20" r="3" fill="#3ea3dc"/></svg>
    <svg viewBox="0 0 103 126"><path fill="#fff" d="M6 32h88v54H6z"/><path fill="#e2e2e2" d="M6 32h88v7H6zM6 39h14v47H6z"/><path d="M7 34h2" stroke="#f55" stroke-width="2"/><path d="M10 34h2" stroke="#fb3" stroke-width="2"/><path d="M13 34h2" stroke="#3c4" stroke-width="2"/><path d="M22 37h60" stroke="#fff" stroke-width="2.500"/><path d="M9 43h8M9 47h8M9 51h8M9 55h8M9 59h8M9 65h8" stroke="#999" stroke-width="1.200"/><path d="M8 71h2M8 75h2M8 79h2M8 83h2" stroke="#f28a3a" stroke-width="1.500"/><path fill="#56c1ee" d="M25 42h7v5h-7zM35 42h7v5h-7z"/><use href="#finder" x="64" y="73" width="28" height="27"/></svg>
    <svg viewBox="0 0 103 126"><path fill="#fff" d="M7 32h88v54H7z"/><path fill="#e4e4e4" d="M7 32h88v4H7zM7 36h12v50H7z"/><path d="M9 40h8v9H9zM9 55h8v9H9zM9 72h8v9H9z" fill="#fff"/><path d="M32 36h8M33 42h5M32 46h12M36 50h7M30 64h10M34 68h14" stroke="#aaa" stroke-width="1"/><path d="M36 57h41" stroke="#7fcbd0" stroke-width="1.500"/><path fill="#fff" d="M66 74h25v17H66z"/><path fill="#a98550" d="M68 76h21v10H68z"/><path fill="#fff" d="M64 78l22-3 3 19-22 4z"/><path fill="#4f7fc4" d="M66 80l19-3 2 15-19 3z"/><circle cx="89" cy="91" r="6" fill="#6a7d8e" stroke="#2e3338" stroke-width="2"/></svg>
    <svg viewBox="0 0 103 126"><path d="M17 24q33-10 66 0l-7 70q-4 7-26 7t-26-7z" fill="url(#gBin)"/><ellipse cx="50" cy="25" rx="33" ry="9" fill="#a8adb1"/><path d="M24 25l6-9 9-2 8 7 9-7 12 10 6 2-6 7H32z" fill="#f1f1f1"/><path d="M31 17l8 5-6 7zM55 20l10 6-8 6z" fill="#4f4f57"/><path d="M40 23l8 3-6 4z" fill="#2fb8d8"/><path d="M48 28l7 2-4 4z" fill="#d6522f"/><path d="M17 26q33 16 66 0" fill="none" stroke="#f7f7f8" stroke-width="2"/></svg>
  </footer>
</div>
</body>
</html>
```
FILE: styles.css
```css
* { box-sizing: border-box; }
html, body { margin: 0; height: 100%; overflow: hidden; }
body { font-family: "Open Sans", sans-serif; color: #333; }
h1, h2, h3, p { margin: 0; }
svg { display: block; flex: none; }
button { border: 0; padding: 0; font: inherit; color: inherit; }
.defs { position: absolute; }

.desktop { position: relative; width: 3360px; height: 2100px; overflow: hidden; background: linear-gradient(#4d80b0 0, #42719f 52px, #8ba2b8 60px, #021424 300px, #021424 100%); }
.wallpaper { position: absolute; left: 0; bottom: 0; }

.menubar { height: 44px; display: flex; align-items: center; padding: 0 46px 0 42px; background: linear-gradient(90deg, #c1e3f4, #badff2 62%, #c3e2f1 76%, #dfe7ee 95%, #e6e8ee); box-shadow: 0 2px #33587f; font: 28px/44px Inter, sans-serif; color: #17303d; position: relative; }
.apple { fill: #17303d; margin-top: -5px; }
.menus { display: grid; grid-template-columns: 118px 130px 116px 166px 212px 182px 164px 136px 70px; margin-left: 41px; white-space: nowrap; letter-spacing: -.25px; }
.status { margin-left: auto; display: flex; align-items: center; }
.status > * { white-space: nowrap; }
.percent { width: 69px; margin-left: 24px; font-size: 24px; letter-spacing: -.4px; }
.status svg:nth-child(2) { margin-left: 30px; }
.clock { width: 195px; padding-left: 36px; }
.siri { margin: 0 23px 0 35px; }

.back-window { position: absolute; right: 0; top: 52px; width: 80px; height: 1898px; background: #ececec; border-radius: 0 12px 12px 0; box-shadow: 0 0 2px #0008; }
.back-tools { height: 110px; border-bottom: 2px solid #bdbdbd; background: linear-gradient(#f7f7f7, #ededed); border-radius: 0 12px 0 0; }
.back-tools::after { content: ""; position: absolute; right: 17px; top: 50px; width: 60px; height: 44px; border: 2px solid #d5d5d5; border-radius: 8px; }
.back-tabs { height: 48px; border-bottom: 2px solid #bdbdbd; background: #e4e4e4; }

.window { position: absolute; left: 0; top: 46px; width: 3324px; height: 1920px; border-radius: 10px 12px 12px 10px; overflow: hidden; background: #fff; display: flex; flex-direction: column; box-shadow: 0 0 2px #0009, 0 0 30px #0005; }
.window::after { content: ""; position: absolute; inset: auto 0 0; height: 80px; background: linear-gradient(#0000, #00000012); pointer-events: none; -webkit-mask: linear-gradient(90deg, #0000, #000 90px, #000 3240px, #0000); mask: linear-gradient(90deg, #0000, #000 90px, #000 3240px, #0000); }
.toolbar { height: 76px; display: flex; align-items: center; padding: 2px 16px 0 26px; background: linear-gradient(#f4f4f4 0, #e5e5e5 3px, #d4d4d4); border-bottom: 2px solid #b1b1b1; }
.lights { display: flex; gap: 16px; width: 130px; }
.lights i { width: 24px; height: 24px; border-radius: 50%; box-shadow: inset 0 0 0 1px #0002; }
.red { background: #fc605b; } .amber { background: #fdbc40; } .green { background: #2ecb4a; }
.nav-buttons { display: flex; gap: 2px; width: 122px; }
.tool { width: 50px; height: 46px; display: grid; place-items: center; border-radius: 8px; background: linear-gradient(#fdfdfd, #f2f2f2); box-shadow: 0 0 0 1px #cacaca, 0 2px 0 #aaa; }
.wide { width: 74px; }
.address { width: 1348px; height: 46px; margin-left: 636px; position: relative; display: flex; justify-content: center; align-items: center; border-radius: 8px; background: linear-gradient(#fdfdfd, #f2f2f2); box-shadow: 0 0 0 1px #cacaca, 0 2px 0 #aaa; }
.site { display: flex; align-items: center; gap: 9px; padding: 3px 0 0; font: 24px/44px Inter, sans-serif; color: #4a4a4a; letter-spacing: -.15px; }
.site svg { margin-top: -4px; }
.reload { position: absolute; right: 12px; top: 7px; }
.share { margin: 0 16px 0 auto; }
.tabs { height: 50px; display: grid; grid-template-columns: 1660px 1615px 1fr; font: 22px/49px Inter, sans-serif; letter-spacing: .09px; text-align: center; border-bottom: 2px solid #a6a6a6; color: #3d3d3d; background: linear-gradient(#c1c1c1, #b8b8b8); }
.active { background: linear-gradient(#d5d5d5, #cbcbcb); color: #1e1e1e; }
.tab { border-right: 1px solid #a5a5a5; }
.new-tab { display: grid; place-items: center; background: #0001; }

.page { flex: 1; display: flex; flex-direction: column; }
.site-header { height: 130px; display: flex; align-items: center; border-bottom: 2px solid #e1e1e1; padding: 3px 0 0 49px; }
.logo { overflow: visible; }
.logo text { font: 800 62px Inter, sans-serif; font-feature-settings: "cv11"; fill: #2a73cc; stroke: #2a73cc; stroke-width: .8px; }
.explore { width: 184px; height: 72px; margin-left: 49px; padding-left: 10px; display: flex; align-items: center; justify-content: center; gap: 13px; border-radius: 4px; background: #2a73cc; color: #fff; font: 700 28px/72px "Open Sans", sans-serif; }
.search { width: 980px; height: 80px; margin: -2px 0 0 80px; display: flex; border: 2px solid #e1e1e1; border-right: 0; border-radius: 4px; font-weight: 300; font-size: 32px; line-height: 73px; letter-spacing: -.15px; color: #555; }
.search span { flex: 1; padding-left: 20px; }
.search button { width: 80px; height: 80px; margin-top: -2px; padding-right: 8px; display: grid; place-items: center; background: #2a73cc; border-radius: 0 2px 2px 0; }
.account { margin: -2px 61px 0 auto; display: flex; align-items: center; font-size: 28px; line-height: 76px; white-space: nowrap; }
.bell { margin-top: 9px; }
.rule { width: 2px; height: 80px; margin: 0 49px 0 52px; background: #e1e1e1; }
.user { width: 250px; margin: -3px 0 0 12px; }
.caret { margin: 5px 0 0 13px; }
.crumbs { height: 90px; display: flex; align-items: center; padding: 0 48px 0 64px; border-bottom: 2px solid #e1e1e1; font: 24px/88px "Liberation Sans", Arial, sans-serif; color: #333; white-space: nowrap; }
.crumbs a { color: #3a82cb; }
.c1 { width: 282px; } .c2 { width: 96px; margin-left: 15px; letter-spacing: -.2px; } .here { margin-left: 15px; letter-spacing: .08px; }
.prev, .next { font: 28px/90px "Open Sans", sans-serif; color: #555; }
.prev { margin-left: auto; }
.crumbs i { width: 2px; height: 28px; margin: 0 34px 0 30px; background: #777; }

.body { flex: 1; display: flex; }
.sidebar { width: 482px; padding-top: 31px; border-right: 2px solid #cbcbcb; white-space: nowrap; }
.sidebar h3 { padding: 12px 48px; font-size: 28px; line-height: 40px; font-weight: 700; color: #1f1f1f; }
.item { display: flex; gap: 25px; height: 144px; padding: 16px 0 0 48px; font-size: 24px; line-height: 36px; }
.item svg { margin-top: 3px; }
.item small { display: block; margin-top: 2px; font-size: 24px; line-height: 40px; color: #757575; }
.current { height: 180px; margin: 1px 0 0; padding-top: 15px; background: #f7f7f7; box-shadow: inset 12px 0 #2a73cc; }
.rail { width: 77px; padding-top: 20px; background: #f5f5f5; box-shadow: 3px 0 6px #0004; }
.rail span { display: grid; place-items: center; height: 76px; background: #fff; border-radius: 4px; padding-right: 7px; padding-bottom: 7px; }

.quiz { width: 1920px; margin-left: 303px; padding-top: 123px; }
.kind { font-weight: 700; font-size: 24px; line-height: 36px; }
h1 { margin-top: 37px; font-size: 68px; line-height: 92px; font-weight: 700; white-space: nowrap; }
h2 { font: 700 28px/40px "Liberation Sans", Arial, sans-serif; letter-spacing: -.12px; }
.step { display: flex; align-items: flex-start; border-bottom: 2px solid #e1e1e1; }
.submit { height: 156px; margin-top: 190px; }
.receive { height: 252px; }
.done { margin: 45px 25px 0 -71px; }
.what { flex: 1; padding-top: 51px; }
.what p { margin-top: 16px; font-size: 24px; line-height: 36px; color: #525252; }
.what b { display: inline-block; width: 113px; }
.again { margin: 71px 35px 0 0; font: 700 26px/40px "Liberation Sans", Arial, sans-serif; letter-spacing: -.2px; color: #2a73cc; }
.grade { width: 512px; height: 180px; margin-top: 34px; padding: 17px 6px 0 44px; display: flex; justify-content: space-between; border-left: 2px solid #e1e1e1; }
.grade strong { display: block; margin-top: 10px; font: 40px/50px "Liberation Sans", Arial, sans-serif; color: #238556; }
.feedback { padding-top: 7px; display: flex; flex-direction: column; align-items: flex-end; }
.feedback button { width: 256px; height: 72px; border-radius: 4px; background: #2a73cc; color: #fff; font: 700 26px/73px "Liberation Sans", Arial, sans-serif; letter-spacing: .08px; }
.feedback p { margin-top: 17px; font-size: 24px; line-height: 36px; }
.votes { display: flex; gap: 35px; justify-content: flex-end; padding: 56px 10px 0 0; }

.dock { position: absolute; left: 82px; bottom: 0; width: 3196px; height: 126px; padding-left: 7px; display: flex; background: linear-gradient(90deg, #42627f, #40607b 40%, #4a657d); border-radius: 12px 12px 0 0; }
.dock > svg { width: 103px; height: 126px; filter: drop-shadow(0 2px 2px #0005); }
.split { width: 3px; height: 94px; margin: 16px 18px 0 21px; background: #17334f; }
.late { margin: 16px 21px 0 25px; }
.petals { isolation: isolate; }
.petals ellipse { mix-blend-mode: multiply; }
.dot { fill: #000; }
.badge, .tiny3d, .month, .day { font-family: Inter, sans-serif; text-anchor: middle; }
.badge { font-size: 22px; fill: #fff; }
.tiny3d { font-size: 13px; fill: #333; }
.month { font-size: 14px; fill: #fff; }
.day { font-size: 40px; font-weight: 300; fill: #222; }
.prompt { font: 700 18px "DejaVu Sans Mono", monospace; fill: #fff; }
.pages { font: 10px Inter, sans-serif; fill: #fff; }
.tv { font: 500 29px Inter, sans-serif; fill: #fff; }
.sticky { font: italic 10px "Open Sans", sans-serif; fill: #333; }
.red-ink { fill: #d8342a; font-weight: 700; }
```
